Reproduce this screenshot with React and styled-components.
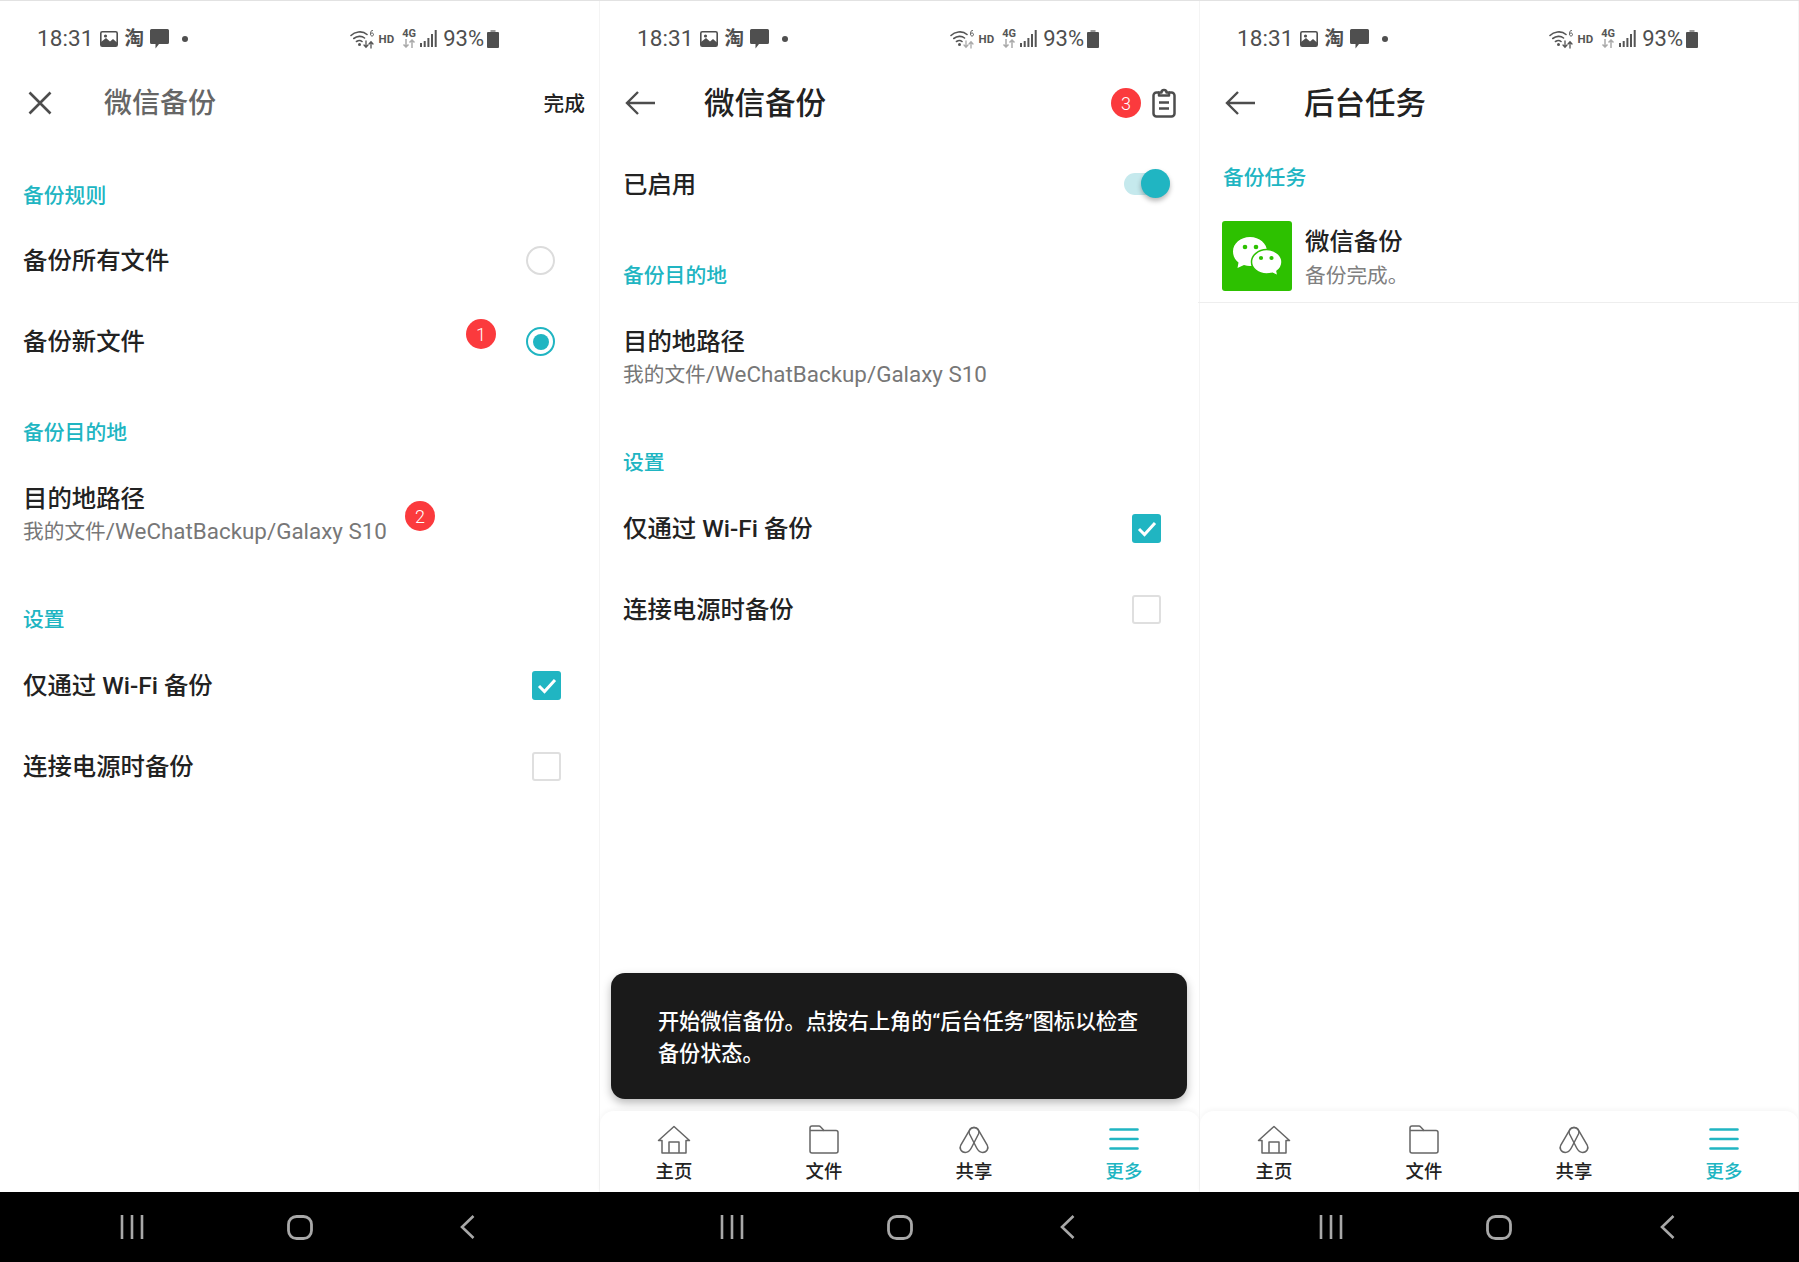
import React from "react";
import styled, { createGlobalStyle } from "styled-components";

const TEAL = "#20b5c2";
const FONT = `Roboto, "Noto Sans CJK SC", sans-serif`;

const Global = createGlobalStyle`
  html, body { margin: 0; padding: 0; background: #fff; }
  body { font-family: ${FONT}; }
  * { box-sizing: border-box; }
`;

const Screens = styled.div`
  display: grid;
  grid-template-columns: 600px 600px 599px;
  width: 1799px;
  height: 1262px;
  overflow: hidden;
  border-top: 1px solid #e2e2e2;
`;
const Phone = styled.section`
  position: relative;
  display: flex;
  flex-direction: column;
  height: 1261px;
  background: #fff;
  &::after {
    content: "";
    position: absolute;
    top: 0;
    right: 0;
    bottom: 70px;
    width: 1px;
    background: #f4f4f4;
  }
`;
const StatusBar = styled.div`
  display: flex;
  align-items: center;
  height: 75px;
  padding: 0 101px 0 37px;
  color: #4f4f4f;
  flex: none;
`;
const Clock = styled.span`
  font-size: 22.5px;
  letter-spacing: 0.1px;
  margin-right: 6px;
  line-height: 1;
`;
const TaoGlyph = styled.span`
  font-size: 19.5px;
  font-weight: 700;
  line-height: 1;
  margin: 0 6px 0 7px;
`;
const Dot = styled.i`
  width: 6px;
  height: 6px;
  border-radius: 50%;
  background: #4f4f4f;
  margin-left: 13px;
`;
const StatusRight = styled.div`
  display: flex;
  align-items: center;
  margin-left: auto;
`;
const HdLabel = styled.span`
  font-size: 11.5px;
  font-weight: 700;
  margin: 0 8px 0 4px;
  color: #555;
`;
const NetStack = styled.span`
  display: flex;
  flex-direction: column;
  align-items: center;
  font-size: 11px;
  font-weight: 700;
  line-height: 10px;
  color: #555;
  margin-right: 4px;
`;
const Percent = styled.span`
  font-size: 22px;
  line-height: 1;
  margin: 0 3px 0 6px;
`;
const Header = styled.header`
  display: flex;
  align-items: center;
  height: 54px;
  flex: none;
  padding: 0 24px 0 28px;
`;
const HeaderIcon = styled.span`
  display: flex;
  width: 76px;
  flex: none;
  color: #4d4d4d;
`;
const Title = styled.h1`
  flex: 1;
  margin: ${(p) => (p.$muted ? 2 : 1)}px 0 0;
  font-weight: 500;
  font-size: ${(p) => (p.$muted ? 28 : 30.5)}px;
  color: ${(p) => (p.$muted ? "#666" : "#222")};
  line-height: 40px;
`;
const DoneAction = styled.span`
  font-size: 20.7px;
  font-weight: 500;
  color: #222;
  margin: 0 -9px 2px 0;
`;
const Content = styled.main`
  flex: 1;
  min-height: 0;
`;
const SectionTitle = styled.h2`
  display: flex;
  align-items: center;
  height: 51px;
  margin: ${(p) => p.$top ?? 25}px 0 0;
  padding: 0 0 1.5px 23px;
  font-size: 20.8px;
  font-weight: 500;
  color: ${TEAL};
`;
const Row = styled.div`
  display: flex;
  align-items: center;
  justify-content: space-between;
  height: ${(p) => (p.$tall ? 116 : 81)}px;
  margin-top: ${(p) => p.$top ?? 0}px;
  padding: 0 23px;
`;
const RowText = styled.div`
  display: flex;
  flex-direction: column;
`;
const RowLabel = styled.span`
  font-size: 24.4px;
  font-weight: 500;
  color: #222;
  line-height: 32px;
`;
const RowSub = styled.span`
  font-size: 20.7px;
  color: #777;
  line-height: 32px;
`;
const PathLatin = styled.span`
  font-size: 22.4px;
`;
const Radio = styled.span`
  display: flex;
  align-items: center;
  justify-content: center;
  width: 29px;
  height: 29px;
  margin-right: 22px;
  border-radius: 50%;
  border: 2.5px solid ${(p) => (p.$on ? TEAL : "#dcdcdc")};
  &::after {
    content: "";
    display: ${(p) => (p.$on ? "block" : "none")};
    width: 16px;
    height: 16px;
    border-radius: 50%;
    background: ${TEAL};
  }
`;
const Check = styled.span`
  display: flex;
  align-items: center;
  justify-content: center;
  width: 29px;
  height: 29px;
  margin-right: 16px;
  border-radius: 3px;
  background: ${(p) => (p.$on ? TEAL : "#fff")};
  border: ${(p) => (p.$on ? "none" : "2.5px solid #dfdfdf")};
`;
const Toggle = styled.span`
  position: relative;
  display: block;
  width: 46px;
  height: 22px;
  margin: 0 7px 2px 0;
  border-radius: 11px;
  background: #c5e9ed;
  &::after {
    content: "";
    position: absolute;
    right: 0;
    top: -4px;
    width: 29px;
    height: 29px;
    border-radius: 50%;
    background: ${TEAL};
    box-shadow: 0 3px 5px rgba(0, 0, 0, 0.28);
  }
`;
const Badge = styled.span`
  position: absolute;
  left: ${(p) => p.$x - 15}px;
  top: ${(p) => p.$y - 15}px;
  display: flex;
  align-items: center;
  justify-content: center;
  width: 30px;
  height: 30px;
  border-radius: 50%;
  background: #fb3a3d;
  color: #fff;
  font-size: 18px;
  font-weight: 300;
`;
const TaskItem = styled.div`
  display: flex;
  align-items: flex-start;
  height: 101px;
  margin-left: -2px;
  padding: 19px 0 0 24px;
  border-bottom: 1px solid #eeeeee;
`;
const AppIcon = styled.span`
  display: block;
  width: 70px;
  height: 70px;
  margin-right: 13px;
  border-radius: 3px;
  background: #2dc100;
  overflow: hidden;
`;
const TaskText = styled.div`
  display: flex;
  flex-direction: column;
  margin-top: 5px;
`;
const TaskSub = styled.span`
  font-size: 20.7px;
  color: #808080;
  line-height: 36px;
`;
const Snackbar = styled.div`
  flex: none;
  height: 126px;
  margin: 0 13px 12px 11px;
  padding: 33px 34px 0 47px;
  border-radius: 14px;
  background: #1a1a1a;
  color: #fff;
  font-size: 21.1px;
  font-weight: 500;
  line-height: 31.5px;
  box-shadow: 0 4px 10px rgba(0, 0, 0, 0.28);
`;
const TabBar = styled.nav`
  display: grid;
  grid-template-columns: repeat(4, 150px);
  flex: none;
  height: 81px;
  padding: 12px 0 0;
  border-radius: 14px 14px 0 0;
  background: #fff;
  box-shadow: 0 -2px 5px rgba(0, 0, 0, 0.04);
`;
const Tab = styled.div`
  display: flex;
  flex-direction: column;
  align-items: center;
  margin-left: -2px;
  color: ${(p) => (p.$active ? TEAL : "#222")};
`;
const TabIcon = styled.span`
  display: flex;
  align-items: center;
  justify-content: center;
  height: 32px;
  margin-bottom: 5px;
`;
const TabLabel = styled.span`
  font-size: 18.4px;
  font-weight: 500;
  line-height: 24px;
`;
const NavBar = styled.div`
  display: grid;
  grid-template-columns: repeat(3, 168px);
  justify-content: center;
  justify-items: center;
  align-items: center;
  flex: none;
  height: 70px;
  margin-left: -1px;
  background: #000;
`;

const Image = () => (
  <svg width="18" height="16" viewBox="0 0 18 16">
    <rect x=".8" y=".8" width="16.4" height="14.4" rx="1.5" fill="#fff" stroke="#4f4f4f" strokeWidth="1.6" />
    <path d="M1 15V11l5-4 4 3.5L13 8l4 3.500V15Z" fill="#4f4f4f" />
    <circle cx="5.500" cy="5" r="1.600" fill="#4f4f4f" />
  </svg>
);
const Message = () => (
  <svg width="19" height="20" viewBox="0 0 19 20">
    <path d="M1.500 0h16A1.500 1.500 0 0 1 19 1.500v12a1.500 1.500 0 0 1-1.500 1.500H9l-3.500 4.500V15h-4A1.500 1.500 0 0 1 0 13.500v-12A1.500 1.500 0 0 1 1.500 0Z" fill="#4f4f4f" />
  </svg>
);
const Wifi = ({ faded }) => (
  <svg width="25" height="20" viewBox="0 0 25 20" fill="none" stroke="#555" strokeLinecap="round">
    <path d="M1 6.500C4.500 3 12 1 17 5.500M3.800 9.500C7 7 11.500 6.500 14.500 9M6.500 12.500c2-1.300 4-1.300 5.500 0" strokeWidth="1.600" />
    <circle cx="9.500" cy="15.500" r="1.500" fill="#555" stroke="none" />
    <path d="M16 12v6M14 16l2 2.300 2-2.300" strokeWidth="1.300" stroke={faded ? "#aaa" : "#555"} />
    <path d="M21 19v-6M19 15l2-2.300 2 2.300" strokeWidth="1.300" stroke={faded ? "#aaa" : "#555"} />
    <path d="M22.500 1.500c-1.500 0-2 1.200-2 3s.5 2.500 1.500 2.500 1.500-.7 1.500-1.500-.6-1.500-1.500-1.500-1.500.6-1.500 1" strokeWidth="1" />
  </svg>
);
const NetArrows = () => (
  <svg width="14" height="9" viewBox="0 0 14 9" fill="none" stroke="#aaa" strokeWidth="1.500">
    <path d="M4 0v8M1.500 5.500 4 8l2.500-2.500M10 9V1M7.500 3.500 10 1l2.500 2.500" />
  </svg>
);
const Signal = () => (
  <svg width="17" height="17" viewBox="0 0 17 17" fill="#555">
    <rect x="0" y="13" width="2" height="4" />
    <rect x="3.700" y="11" width="2" height="6" />
    <rect x="7.400" y="8" width="2" height="9" />
    <rect x="11" y="4" width="2" height="13" />
    <rect x="14.700" y="0" width="2" height="17" />
  </svg>
);
const Battery = () => (
  <svg width="12" height="18" viewBox="0 0 12 18">
    <rect x="3.500" y="0" width="5" height="3" fill="#9a9a9a" />
    <rect x="0" y="2" width="12" height="16" rx="1" fill="#4f4f4f" />
  </svg>
);

const Status = ({ faded }) => (
  <StatusBar>
    <Clock>18:31</Clock>
    <Image />
    <TaoGlyph>淘</TaoGlyph>
    <Message />
    <Dot />
    <StatusRight>
      <Wifi faded={faded} />
      <HdLabel>HD</HdLabel>
      <NetStack>
        4G
        <NetArrows />
      </NetStack>
      <Signal />
      <Percent>93%</Percent>
      <Battery />
    </StatusRight>
  </StatusBar>
);

const CloseIcon = () => (
  <svg width="24" height="24" viewBox="0 0 24 24" fill="none" stroke="currentColor" strokeWidth="2.600">
    <path d="M1.500 1.500 22.500 22.500M22.500 1.500 1.500 22.500" />
  </svg>
);
const BackIcon = () => (
  <svg width="30" height="24" viewBox="0 0 30 24" fill="none" stroke="currentColor" strokeWidth="2.400" style={{ marginLeft: -3 }}>
    <path d="M30 12H2M13 1 2 12l11 11" />
  </svg>
);
const ClipboardIcon = () => (
  <svg width="24" height="30" viewBox="0 0 24 30" fill="none" stroke="#4d4d4d" strokeWidth="2.500">
    <path d="M7 4.500H4.500a3 3 0 0 0-3 3v18a3 3 0 0 0 3 3h15a3 3 0 0 0 3-3v-18a3 3 0 0 0-3-3H17" />
    <path d="M7 7.500V4.500h2.500a2.500 2.500 0 0 1 5 0H17v3Z" strokeLinejoin="round" />
    <path d="M7 14.500h10M7 20.500h10" />
  </svg>
);
const Tick = () => (
  <svg width="20" height="16" viewBox="0 0 20 16" fill="none" stroke="#fff" strokeWidth="3">
    <path d="M2 8l5.500 5.500L18 2" />
  </svg>
);
const WeChat = () => (
  <svg width="70" height="70" viewBox="0 0 70 70">
    <path d="M28 16c9.500 0 17 6.500 17 14.500S37.500 45 28 45c-2 0-4-.3-6-.9L15.500 47l1-5.500C13 39 11 35 11 30.500 11 22.500 18.500 16 28 16Z" fill="#fff" />
    <circle cx="23" cy="26" r="2.300" fill="#2dc100" />
    <circle cx="34" cy="26" r="2.300" fill="#2dc100" />
    <path d="M44.500 28.500C52.800 28.500 60 34 60 41c0 3.800-2 7-5 9.200l1 4.800-5.500-2.800c-2 .6-4 .8-6 .8-8.300 0-15-5.500-15-12s6.700-12.500 15-12.500Z" fill="#fff" stroke="#2dc100" strokeWidth="1.500" />
    <circle cx="39" cy="37" r="2.100" fill="#2dc100" />
    <circle cx="49.500" cy="37" r="2.100" fill="#2dc100" />
  </svg>
);

const HomeIcon = () => (
  <svg width="34" height="29" viewBox="0 0 34 29" fill="none" stroke="#666" strokeWidth="1.500">
    <path d="M1.500 15.500 17 1.500l15.500 14H29V28H5V15.500ZM12 28V17h10v11" strokeLinejoin="round" />
  </svg>
);
const FolderIcon = () => (
  <svg width="30" height="29" viewBox="0 0 30 29" fill="none" stroke="#666" strokeWidth="1.500">
    <path d="M1 3a2 2 0 0 1 2-2h7a2 2 0 0 1 1.500.7L15 5.500h12a2 2 0 0 1 2 2V26a2 2 0 0 1-2 2H3a2 2 0 0 1-2-2Z" strokeLinejoin="round" />
    <path d="M1 5.500h14" />
  </svg>
);
const ShareIcon = () => (
  <svg width="32" height="30" viewBox="0 0 32 30" fill="none" stroke="#666" strokeWidth="1.500">
    <path d="M16 3.500C13.500 3.500 12 5 10.500 8L2.800 21c-1.800 3.300.2 7.500 4.500 7.500 3 0 4.700-2 6-4.500L20.500 10c1.200-2.500 0-6.500-4.500-6.500Z" />
    <path d="M16 3.500c2.500 0 4 1.500 5.500 4.500l7.700 13c1.800 3.300-.2 7.500-4.500 7.500-3 0-4.700-2-6-4.500L11.500 10C10.300 7.500 11.500 3.500 16 3.500Z" />
  </svg>
);
const MenuIcon = () => (
  <svg width="30" height="24" viewBox="0 0 30 24" fill="none" stroke={TEAL} strokeWidth="2.600" strokeLinecap="round">
    <path d="M1.500 2.500h27M1.500 12h27M1.500 21.500h27" />
  </svg>
);

const TabsBar = () => (
  <TabBar>
    <Tab><TabIcon><HomeIcon /></TabIcon><TabLabel>主页</TabLabel></Tab>
    <Tab><TabIcon><FolderIcon /></TabIcon><TabLabel>文件</TabLabel></Tab>
    <Tab><TabIcon><ShareIcon /></TabIcon><TabLabel>共享</TabLabel></Tab>
    <Tab $active><TabIcon><MenuIcon /></TabIcon><TabLabel>更多</TabLabel></Tab>
  </TabBar>
);

const SystemNav = () => (
  <NavBar>
    <svg width="24" height="24" viewBox="0 0 24 24" stroke="#a8a8a8" strokeWidth="2.600">
      <path d="M2 0v24M12 0v24M22 0v24" />
    </svg>
    <svg width="26" height="25" viewBox="0 0 26 25" fill="none" stroke="#a8a8a8" strokeWidth="2.800">
      <rect x="1.500" y="1.500" width="23" height="22" rx="8" />
    </svg>
    <svg width="15" height="24" viewBox="0 0 15 24" fill="none" stroke="#a8a8a8" strokeWidth="2.600">
      <path d="M13.500 1 2 12l11.500 11" />
    </svg>
  </NavBar>
);

const Destination = () => (
  <Row $tall>
    <RowText>
      <RowLabel>目的地路径</RowLabel>
      <RowSub>我的文件<PathLatin>/WeChatBackup/Galaxy S10</PathLatin></RowSub>
    </RowText>
  </Row>
);

export default function App() {
  return (
    <>
      <Global />
      <Screens>
        <Phone>
          <Status />
          <Header>
            <HeaderIcon><CloseIcon /></HeaderIcon>
            <Title $muted>微信备份</Title>
            <DoneAction>完成</DoneAction>
          </Header>
          <Content>
            <SectionTitle $top={39}>备份规则</SectionTitle>
            <Row>
              <RowLabel>备份所有文件</RowLabel>
              <Radio />
            </Row>
            <Row>
              <RowLabel>备份新文件</RowLabel>
              <Radio $on />
            </Row>
            <SectionTitle $top={24}>备份目的地</SectionTitle>
            <Destination />
            <SectionTitle $top={20}>设置</SectionTitle>
            <Row $top={1}>
              <RowLabel>仅通过 Wi-Fi 备份</RowLabel>
              <Check $on><Tick /></Check>
            </Row>
            <Row>
              <RowLabel>连接电源时备份</RowLabel>
              <Check />
            </Row>
          </Content>
          <SystemNav />
          <Badge $x={481} $y={333}>1</Badge>
          <Badge $x={420} $y={515}>2</Badge>
        </Phone>

        <Phone>
          <Status faded />
          <Header>
            <HeaderIcon><BackIcon /></HeaderIcon>
            <Title>微信备份</Title>
            <ClipboardIcon />
          </Header>
          <Content>
            <Row $top={14}>
              <RowLabel>已启用</RowLabel>
              <Toggle />
            </Row>
            <SectionTitle $top={24}>备份目的地</SectionTitle>
            <Destination />
            <SectionTitle $top={20}>设置</SectionTitle>
            <Row $top={1}>
              <RowLabel>仅通过 Wi-Fi 备份</RowLabel>
              <Check $on><Tick /></Check>
            </Row>
            <Row>
              <RowLabel>连接电源时备份</RowLabel>
              <Check />
            </Row>
          </Content>
          <Snackbar>开始微信备份。点按右上角的“后台任务”图标以检查备份状态。</Snackbar>
          <TabsBar />
          <SystemNav />
          <Badge $x={526} $y={102}>3</Badge>
        </Phone>

        <Phone>
          <Status />
          <Header>
            <HeaderIcon><BackIcon /></HeaderIcon>
            <Title>后台任务</Title>
          </Header>
          <Content>
            <SectionTitle $top={21}>备份任务</SectionTitle>
            <TaskItem>
              <AppIcon><WeChat /></AppIcon>
              <TaskText>
                <RowLabel>微信备份</RowLabel>
                <TaskSub>备份完成。</TaskSub>
              </TaskText>
            </TaskItem>
          </Content>
          <TabsBar />
          <SystemNav />
        </Phone>
      </Screens>
    </>
  );
}
